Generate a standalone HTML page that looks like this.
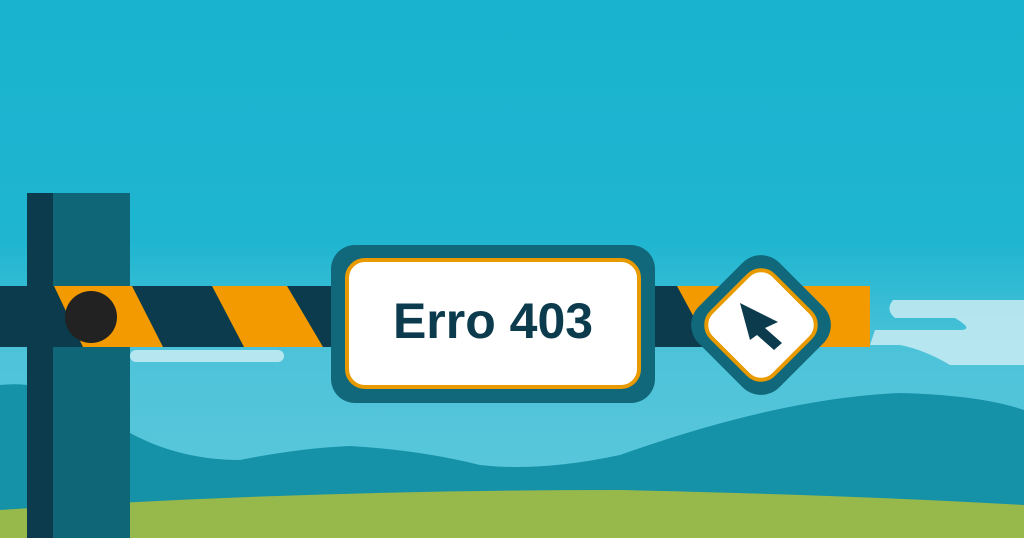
<!DOCTYPE html>
<html><head><meta charset="utf-8"><style>
html,body{margin:0;padding:0;width:1024px;height:538px;overflow:hidden;background:#1ab4cf}
svg{display:block}
</style></head><body>
<svg width="1024" height="538" viewBox="0 0 1024 538" xmlns="http://www.w3.org/2000/svg">
<defs>
<linearGradient id="sky" x1="0" y1="0" x2="0" y2="1">
<stop offset="0" stop-color="#19b3cf"/><stop offset="0.45" stop-color="#1fb5d0"/><stop offset="0.66" stop-color="#4ec3d9"/><stop offset="1" stop-color="#5ec8dc"/>
</linearGradient>
</defs>
<rect width="1024" height="538" fill="url(#sky)"/>
<!-- clouds -->
<rect x="130" y="350" width="154" height="12" rx="6" fill="#c9ecf3" opacity="0.85"/>
<path d="M893 300 H1024 V365 H950 Q925 350 900 345 L870 345 L875 330 H960 Q975 330 955 318 H895 Q885 310 893 300Z" fill="#c9ecf3" opacity="0.85"/>
<!-- hills -->
<path d="M0 385 Q60 378 130 432 L130 538 L0 538Z" fill="#1591a8"/>
<path d="M130 433 Q180 460 240 460 Q300 448 350 446 Q420 450 480 465 Q540 472 620 455 Q780 398 900 393 Q980 395 1024 410 V538 H130Z" fill="#1591a8"/>
<!-- grass -->
<path d="M0 510 Q300 490 620 490 Q850 495 1024 505 V538 H0Z" fill="#97b84a"/>
<!-- post -->
<rect x="27" y="193" width="26" height="345" fill="#0b3b4d"/>
<rect x="53" y="193" width="77" height="345" fill="#0f6676"/>
<!-- bar -->
<rect x="0" y="286" width="870" height="61" fill="#0b3b4d"/>
<path d="M54 286 H132 L163 347 H83Z M212 286 H287 L323 347 H244Z M677 286 H870 V347 H710Z" fill="#f29a00"/>
<circle cx="91" cy="317" r="26" fill="#222"/>
<!-- sign -->
<rect x="331" y="245" width="324" height="158" rx="24" fill="#10687a"/>
<rect x="347" y="260" width="292" height="127" rx="18" fill="#fff" stroke="#e89a00" stroke-width="4"/>
<text x="493" y="338" text-anchor="middle" font-family="Liberation Sans, sans-serif" font-weight="bold" font-size="50" fill="#0b3b4d">Erro 403</text>
<!-- diamond -->
<g transform="translate(761 325) rotate(45)">
<rect x="-57" y="-57" width="114" height="114" rx="26" fill="#10687a"/>
<rect x="-44" y="-44" width="88" height="88" rx="18" fill="#fff" stroke="#e89a00" stroke-width="4"/>
</g>
<path d="M740 303 L778 322 L765 328 L782 343 L774 350 L757 335 L750 340Z" fill="#0b3b4d"/>
</svg>
</body></html>
